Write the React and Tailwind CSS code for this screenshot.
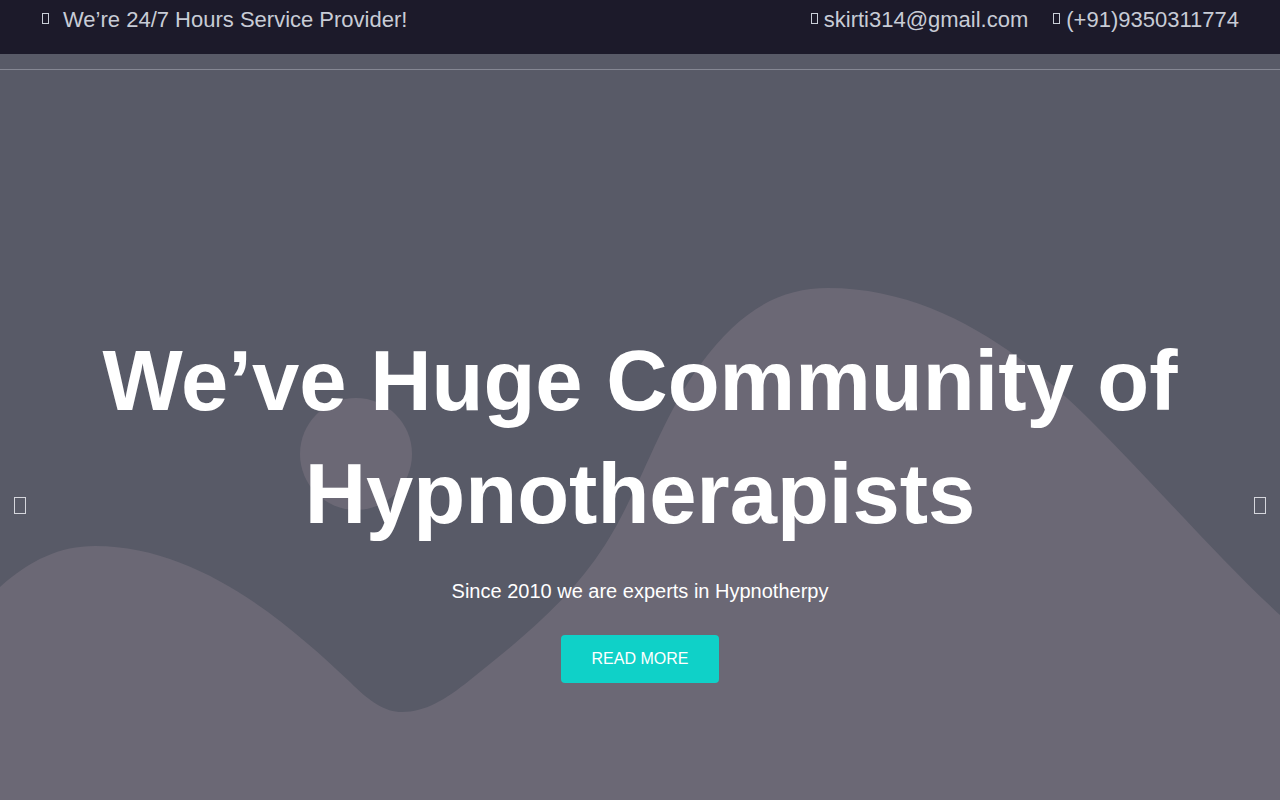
import React from 'react';

function Tofu({ className = '' }) {
  return <span className={`inline-block border border-[#c9cfd8] ${className}`} />;
}

function TopBar() {
  return (
    <div className="h-[54px] bg-[#1c1a2a] flex items-start justify-between pt-[7px] pl-[42px] pr-[41px] text-[22px] leading-[26px] text-[#c8ccd6]">
      <div className="flex items-center">
        <Tofu className="w-[7px] h-[11px] mr-[14px] -mt-[4px]" />
        <span>We’re 24/7 Hours Service Provider!</span>
      </div>
      <div className="flex items-center">
        <Tofu className="w-[7px] h-[11px] mr-[6px] -mt-[4px]" />
        <span>skirti314@gmail.com</span>
        <Tofu className="w-[7px] h-[11px] ml-[25px] mr-[6px] -mt-[4px]" />
        <span>(+91)9350311774</span>
      </div>
    </div>
  );
}

function Hero() {
  return (
    <section className="relative h-[746px] bg-[#585a67] overflow-hidden">
      <div className="h-[16px] border-b border-[#858793]" />
      {/* decorative shapes */}
      <svg className="absolute left-0 top-0 w-[1280px] h-[746px]" viewBox="0 54 1280 746">
        <circle cx="356" cy="454" r="56" fill="#6b6875" />
        <path
          d="M0,587 C30,560 60,546 95,546 C200,546 290,625 350,682 C370,702 385,712 402,712 C425,712 445,700 470,680 C520,640 570,600 605,545 C640,490 660,420 700,365 C740,310 780,288 828,288 C940,288 1030,360 1090,420 C1160,490 1220,560 1280,615 L1280,800 L0,800 Z"
          fill="#6b6875"
        />
      </svg>

      <Tofu className="absolute left-[14px] top-[443px] w-[12px] h-[17px] border-[#d5d6dc]" />
      <Tofu className="absolute right-[14px] top-[443px] w-[12px] h-[17px] border-[#d5d6dc]" />

      <div className="relative flex flex-col items-center text-center pt-[254px]">
        <h1 className="font-bold text-white text-[85px] leading-[113px] w-[1200px]">
          We’ve Huge Community of Hypnotherapists
        </h1>
        <p className="mt-[29px] text-[20px] text-white leading-[24px]">Since 2010 we are experts in Hypnotherpy</p>
        <a href="#" className="mt-[32px] w-[158px] h-[48px] flex items-center justify-center rounded bg-[#0fd1c8] text-white text-[16px] uppercase">
          Read More
        </a>
      </div>
    </section>
  );
}

export default function App() {
  return (
    <div className="w-[1280px] h-[800px] overflow-hidden font-['Liberation_Sans',Arial,sans-serif]">
      <TopBar />
      <Hero />
    </div>
  );
}
